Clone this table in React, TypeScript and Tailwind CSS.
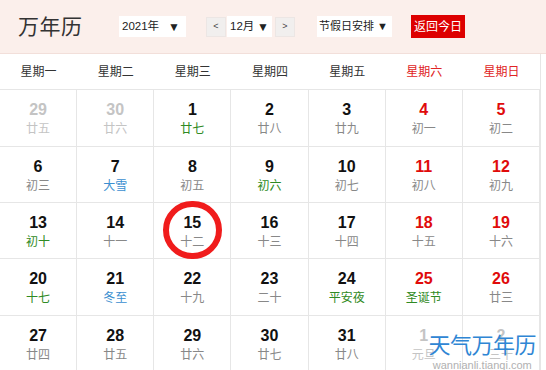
import React from 'react';

type Day = {
  d: number;
  lunar: string;
  muted?: boolean;
  red?: boolean;
  tone?: 'green' | 'blue';
};

const weekdays = ['星期一', '星期二', '星期三', '星期四', '星期五', '星期六', '星期日'];

const days: Day[] = [
  { d: 29, lunar: '廿五', muted: true },
  { d: 30, lunar: '廿六', muted: true },
  { d: 1, lunar: '廿七', tone: 'green' },
  { d: 2, lunar: '廿八' },
  { d: 3, lunar: '廿九' },
  { d: 4, lunar: '初一', red: true },
  { d: 5, lunar: '初二', red: true },
  { d: 6, lunar: '初三' },
  { d: 7, lunar: '大雪', tone: 'blue' },
  { d: 8, lunar: '初五' },
  { d: 9, lunar: '初六', tone: 'green' },
  { d: 10, lunar: '初七' },
  { d: 11, lunar: '初八', red: true },
  { d: 12, lunar: '初九', red: true },
  { d: 13, lunar: '初十', tone: 'green' },
  { d: 14, lunar: '十一' },
  { d: 15, lunar: '十二' },
  { d: 16, lunar: '十三' },
  { d: 17, lunar: '十四' },
  { d: 18, lunar: '十五', red: true },
  { d: 19, lunar: '十六', red: true },
  { d: 20, lunar: '十七', tone: 'green' },
  { d: 21, lunar: '冬至', tone: 'blue' },
  { d: 22, lunar: '十九' },
  { d: 23, lunar: '二十' },
  { d: 24, lunar: '平安夜', tone: 'green' },
  { d: 25, lunar: '圣诞节', red: true, tone: 'green' },
  { d: 26, lunar: '廿三', red: true },
  { d: 27, lunar: '廿四' },
  { d: 28, lunar: '廿五' },
  { d: 29, lunar: '廿六' },
  { d: 30, lunar: '廿七' },
  { d: 31, lunar: '廿八' },
  { d: 1, lunar: '元旦', muted: true },
  { d: 2, lunar: '三十', muted: true },
];

const cjk = { fontFamily: '"Liberation Sans", "Noto Sans CJK SC", sans-serif' };

function DayCell({ day }: { day: Day }) {
  const numColor = day.muted ? 'text-[#c4c4c4]' : day.red ? 'text-[#e00b0b]' : 'text-[#111]';
  const lunarColor = day.muted
    ? 'text-[#c4c4c4]'
    : day.tone === 'green'
      ? 'text-[#2f8a23]'
      : day.tone === 'blue'
        ? 'text-[#3b8fd0]'
        : 'text-[#888]';
  return (
    <div className="flex flex-col items-center border-r border-b border-[#e6e6e6] pt-[10px]">
      <span className={`text-[16px] leading-[20px] font-bold ${numColor}`}>{day.d}</span>
      <span className={`text-[12px] leading-[18px] ${lunarColor}`}>{day.lunar}</span>
    </div>
  );
}

export default function App() {
  return (
    <div className="relative w-[546px] h-[370px] overflow-hidden bg-white" style={cjk}>
      <div className="h-[54px] bg-[#fbefeb] border-b border-[#f2dfda] flex items-center whitespace-nowrap">
        <h1 className="ml-[18px] w-[64px] shrink-0 text-[21px] text-[#333] leading-none tracking-[0.5px]">万年历</h1>
        <div className="ml-[37px] w-[67px] shrink-0 h-[21px] bg-white flex items-center justify-between px-[3px] text-[11.5px] text-[#222]">
          <span>2021年</span>
          <span className="text-[12px] mr-[3px]">▼</span>
        </div>
        <div className="ml-[20px] shrink-0 flex items-center">
          <button className="w-[20px] h-[20px] bg-[#f1efee] border border-[#ece6e4] text-[9px] text-[#444] flex items-center justify-center">
            &lt;
          </button>
          <div className="ml-[1px] w-[45px] h-[21px] bg-white flex items-center justify-between px-[3px] text-[11.5px] text-[#222]">
            <span>12月</span>
            <span className="text-[12px]">▼</span>
          </div>
          <button className="ml-[3px] w-[20px] h-[20px] bg-[#f1efee] border border-[#ece6e4] text-[9px] text-[#444] flex items-center justify-center">
            &gt;
          </button>
        </div>
        <div className="ml-[22px] w-[75px] shrink-0 h-[21px] bg-white flex items-center justify-between pl-[2px] pr-[4px] text-[11px] text-[#222]">
          <span>节假日安排</span>
          <span className="text-[11px]">▼</span>
        </div>
        <button className="ml-[19px] w-[54px] shrink-0 h-[23px] bg-[#dd0000] text-white text-[12px] flex items-center justify-center">
          返回今日
        </button>
      </div>

      <div className="w-[541px] border-r border-[#e6e6e6]">
        <div className="grid grid-cols-7 h-[36px] border-b border-[#e6e6e6]">
          {weekdays.map((w, i) => (
            <div
              key={w}
              className={`flex items-center justify-center text-[12px] ${i >= 5 ? 'text-[#e02424]' : 'text-[#333]'}`}
            >
              {w}
            </div>
          ))}
        </div>
        <div className="grid grid-cols-7 grid-rows-[57px_56px_56px_57px_56px]">
          {days.map((day, i) => (
            <DayCell key={i} day={day} />
          ))}
        </div>
      </div>

      {/* today marker */}
      <div className="absolute left-[163px] top-[201px] w-[59px] h-[58px] rounded-full border-[6px] border-[#f01c1c]" />

      {/* watermark */}
      <div className="absolute right-[10px] bottom-[-2px] flex flex-col items-center pointer-events-none">
        <span className="text-[22px] leading-[26px] text-[#2f86d4] tracking-[-0.5px]">天气万年历</span>
        <span className="text-[11px] leading-[13px] text-[#a9a9a9] opacity-90">wannianli.tianqi.com</span>
      </div>
    </div>
  );
}
